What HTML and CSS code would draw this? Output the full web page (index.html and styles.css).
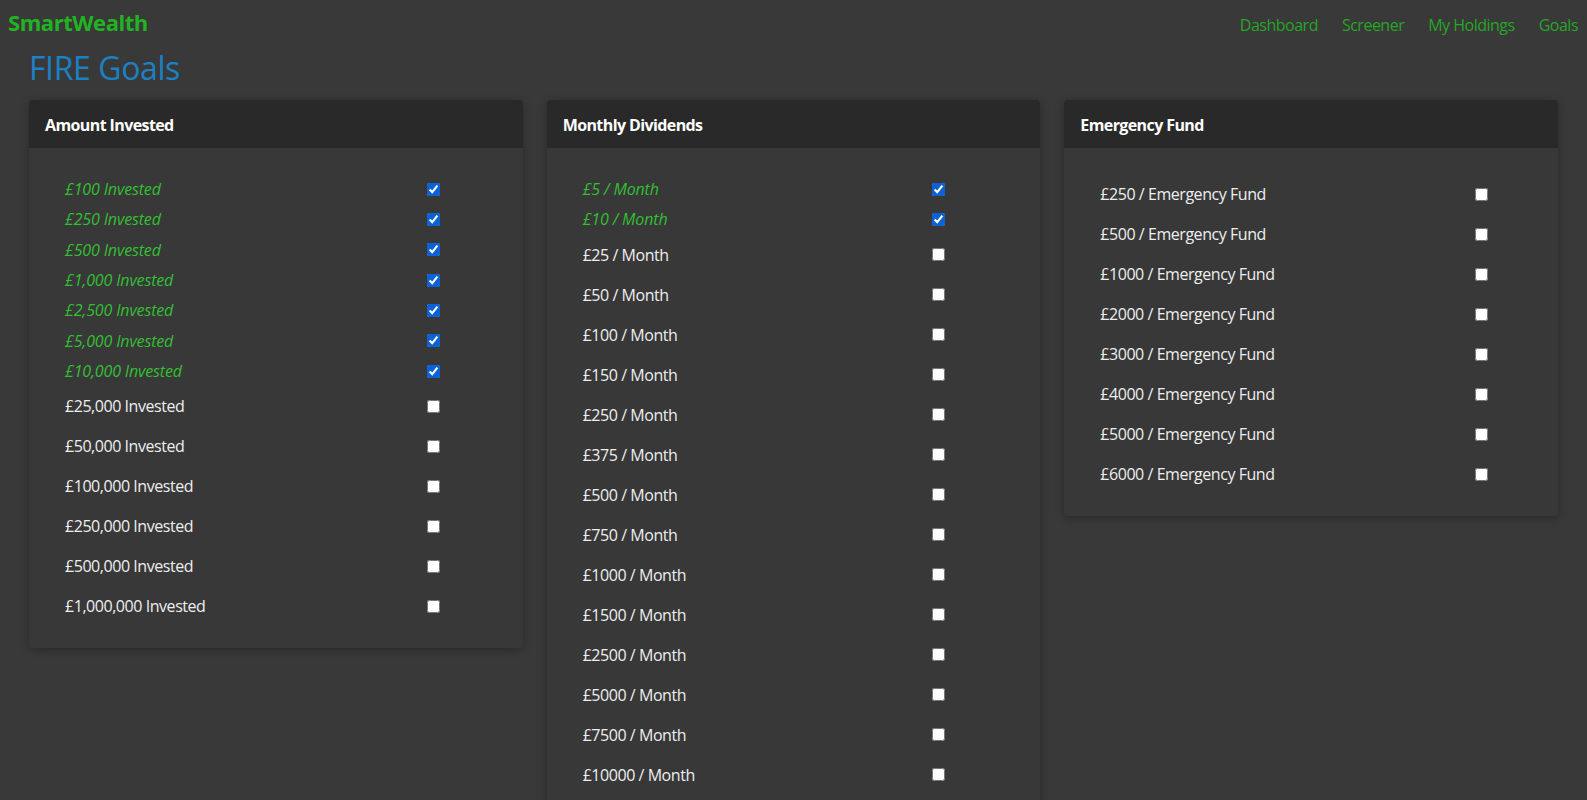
FILE: index.html
```html
<!DOCTYPE html>
<html lang="en">
<head>
<meta charset="utf-8">
<title>SmartWealth - FIRE Goals</title>
<link rel="stylesheet" href="styles.css">
</head>
<body>
<nav class="topbar">
  <a class="brand" href="#">SmartWealth</a>
  <ul class="nav-links">
    <li><a href="#">Dashboard</a></li>
    <li><a href="#">Screener</a></li>
    <li><a href="#">My Holdings</a></li>
    <li><a href="#">Goals</a></li>
  </ul>
</nav>
<main class="page">
  <h1 class="page-title">FIRE Goals</h1>
  <div class="goal-grid">
    <section class="goal-card">
      <header class="goal-card__header"><h2 class="goal-card__title">Amount Invested</h2></header>
      <div class="goal-card__body">
        <ul class="goal-list goal-list--invested">
          <li class="goal-row is-done"><span class="goal-label">£100 Invested</span><input type="checkbox" checked></li>
          <li class="goal-row is-done"><span class="goal-label">£250 Invested</span><input type="checkbox" checked></li>
          <li class="goal-row is-done"><span class="goal-label">£500 Invested</span><input type="checkbox" checked></li>
          <li class="goal-row is-done"><span class="goal-label">£1,000 Invested</span><input type="checkbox" checked></li>
          <li class="goal-row is-done"><span class="goal-label">£2,500 Invested</span><input type="checkbox" checked></li>
          <li class="goal-row is-done"><span class="goal-label">£5,000 Invested</span><input type="checkbox" checked></li>
          <li class="goal-row is-done"><span class="goal-label">£10,000 Invested</span><input type="checkbox" checked></li>
          <li class="goal-row"><span class="goal-label">£25,000 Invested</span><input type="checkbox"></li>
          <li class="goal-row"><span class="goal-label">£50,000 Invested</span><input type="checkbox"></li>
          <li class="goal-row"><span class="goal-label">£100,000 Invested</span><input type="checkbox"></li>
          <li class="goal-row"><span class="goal-label">£250,000 Invested</span><input type="checkbox"></li>
          <li class="goal-row"><span class="goal-label">£500,000 Invested</span><input type="checkbox"></li>
          <li class="goal-row"><span class="goal-label">£1,000,000 Invested</span><input type="checkbox"></li>
        </ul>
      </div>
    </section>
    <section class="goal-card">
      <header class="goal-card__header"><h2 class="goal-card__title">Monthly Dividends</h2></header>
      <div class="goal-card__body">
        <ul class="goal-list goal-list--monthly">
          <li class="goal-row is-done"><span class="goal-label">£5 / Month</span><input type="checkbox" checked></li>
          <li class="goal-row is-done"><span class="goal-label">£10 / Month</span><input type="checkbox" checked></li>
          <li class="goal-row"><span class="goal-label">£25 / Month</span><input type="checkbox"></li>
          <li class="goal-row"><span class="goal-label">£50 / Month</span><input type="checkbox"></li>
          <li class="goal-row"><span class="goal-label">£100 / Month</span><input type="checkbox"></li>
          <li class="goal-row"><span class="goal-label">£150 / Month</span><input type="checkbox"></li>
          <li class="goal-row"><span class="goal-label">£250 / Month</span><input type="checkbox"></li>
          <li class="goal-row"><span class="goal-label">£375 / Month</span><input type="checkbox"></li>
          <li class="goal-row"><span class="goal-label">£500 / Month</span><input type="checkbox"></li>
          <li class="goal-row"><span class="goal-label">£750 / Month</span><input type="checkbox"></li>
          <li class="goal-row"><span class="goal-label">£1000 / Month</span><input type="checkbox"></li>
          <li class="goal-row"><span class="goal-label">£1500 / Month</span><input type="checkbox"></li>
          <li class="goal-row"><span class="goal-label">£2500 / Month</span><input type="checkbox"></li>
          <li class="goal-row"><span class="goal-label">£5000 / Month</span><input type="checkbox"></li>
          <li class="goal-row"><span class="goal-label">£7500 / Month</span><input type="checkbox"></li>
          <li class="goal-row"><span class="goal-label">£10000 / Month</span><input type="checkbox"></li>
        </ul>
      </div>
    </section>
    <section class="goal-card">
      <header class="goal-card__header"><h2 class="goal-card__title">Emergency Fund</h2></header>
      <div class="goal-card__body">
        <ul class="goal-list goal-list--emergency">
          <li class="goal-row"><span class="goal-label">£250 / Emergency Fund</span><input type="checkbox"></li>
          <li class="goal-row"><span class="goal-label">£500 / Emergency Fund</span><input type="checkbox"></li>
          <li class="goal-row"><span class="goal-label">£1000 / Emergency Fund</span><input type="checkbox"></li>
          <li class="goal-row"><span class="goal-label">£2000 / Emergency Fund</span><input type="checkbox"></li>
          <li class="goal-row"><span class="goal-label">£3000 / Emergency Fund</span><input type="checkbox"></li>
          <li class="goal-row"><span class="goal-label">£4000 / Emergency Fund</span><input type="checkbox"></li>
          <li class="goal-row"><span class="goal-label">£5000 / Emergency Fund</span><input type="checkbox"></li>
          <li class="goal-row"><span class="goal-label">£6000 / Emergency Fund</span><input type="checkbox"></li>
        </ul>
      </div>
    </section>
  </div>
</main>
</body>
</html>
```
FILE: styles.css
```css
* { box-sizing: border-box; }

html, body {
  margin: 0;
  padding: 0;
  background: #393939;
  color: #f0f0f0;
  font-family: "Open Sans", "Noto Sans", "Liberation Sans", sans-serif;
  font-size: 16px;
}

a { text-decoration: none; }

.topbar {
  display: flex;
  align-items: baseline;
  justify-content: space-between;
  height: 44px;
  padding: 7px 9px 0 8px;
}

.brand {
  color: #22b322;
  font-size: 22px;
  font-weight: 700;
  letter-spacing: -0.45px;
}

.nav-links {
  display: flex;
  gap: 24px;
  list-style: none;
  margin: 0;
  padding: 0;
}

.nav-links a {
  color: #25a625;
  font-size: 16px;
  letter-spacing: -0.5px;
}

.page {
  padding: 4px 29px 0;
}

.page-title {
  margin: 0 0 12px;
  color: #1c80c2;
  font-size: 32px;
  font-weight: 400;
  line-height: 40px;
  letter-spacing: -0.4px;
}

.goal-grid {
  display: grid;
  grid-template-columns: repeat(3, 1fr);
  gap: 24px;
  align-items: start;
}

.goal-card {
  background: #383838;
  border-radius: 4px;
  box-shadow: 0 2px 8px rgba(0, 0, 0, 0.28);
  overflow: hidden;
}

.goal-card__header {
  display: flex;
  align-items: center;
  height: 48px;
  padding: 1px 16px 0;
  background: #292929;
}

.goal-card__title {
  margin: 0;
  color: #ffffff;
  font-size: 16px;
  font-weight: 700;
  letter-spacing: -0.6px;
}

.goal-card__body {
  padding: 26px 0 22px 36px;
}

.goal-list {
  list-style: none;
  margin: 0;
  padding: 0;
}

.goal-list--invested { --label-col: 362px; }
.goal-list--monthly { --label-col: 349px; }
.goal-list--emergency { --label-col: 375px; }

.goal-row {
  display: grid;
  grid-template-columns: var(--label-col) 13px;
  align-items: center;
  height: 40px;
}

.goal-row.is-done {
  height: 30.33px;
}

.goal-label {
  color: #eeeeee;
  letter-spacing: -0.45px;
  white-space: nowrap;
}

.is-done .goal-label {
  color: #33bf33;
  font-style: italic;
  letter-spacing: -0.15px;
}

.goal-row input {
  width: 13px;
  height: 13px;
  margin: 0;
  accent-color: #0b62d6;
}
```
